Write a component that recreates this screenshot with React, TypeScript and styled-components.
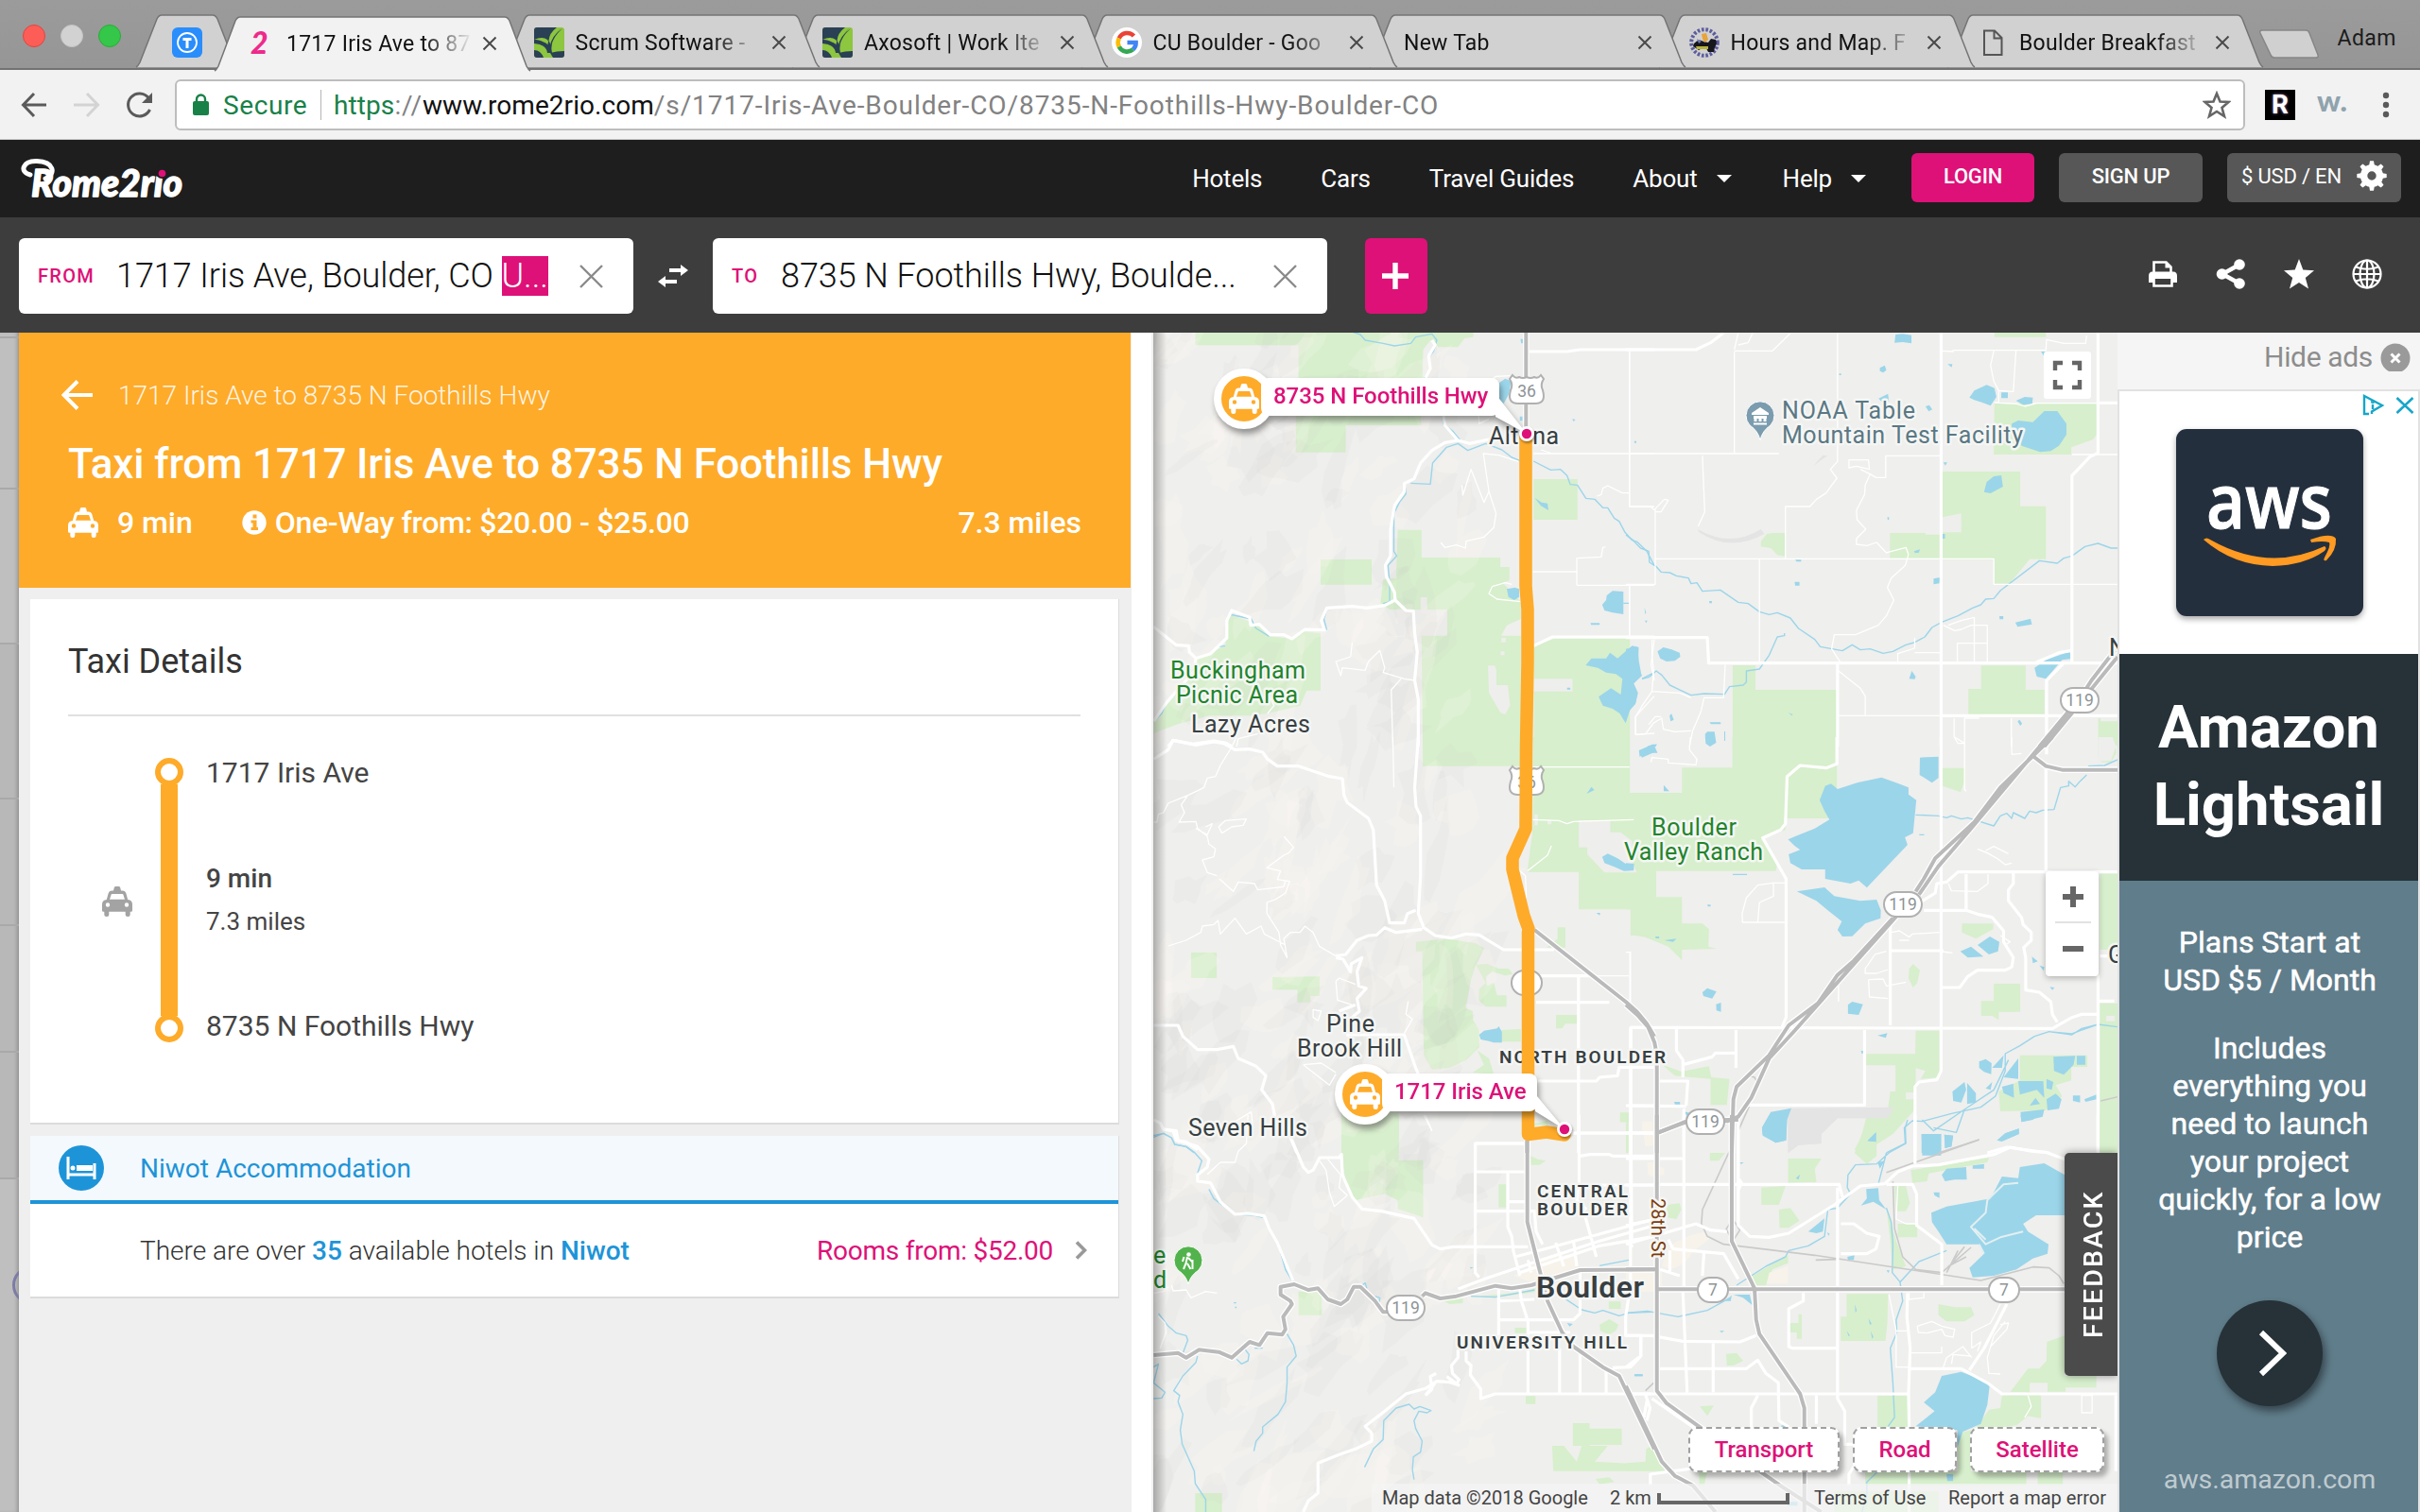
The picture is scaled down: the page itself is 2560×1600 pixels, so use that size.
import React from "react";
import styled, { createGlobalStyle } from "styled-components";

const PINK = "#de1178";
const ORANGE = "#feab2a";
const BLUE = "#1e94d8";
const UI = `Roboto, "Liberation Sans", sans-serif`;

const GlobalStyle = createGlobalStyle`
  * { box-sizing: border-box; }
  html, body { margin: 0; padding: 0; overflow: hidden; }
  body { width: 2560px; height: 1600px; background: #efefef; font-family: ${UI}; }
  svg { display: block; flex: none; }
`;

const Screen = styled.div`
  width: 2560px;
  height: 1600px;
  display: flex;
  flex-direction: column;
  overflow: hidden;
`;

/* ---------- browser chrome ---------- */

const TabStrip = styled.div`
  height: 74px;
  flex: none;
  display: flex;
  align-items: flex-end;
  background: linear-gradient(#9b9b9b, #969696);
  border-bottom: 2px solid #727272;
  position: relative;
`;
const Lights = styled.div`
  display: flex;
  gap: 16px;
  width: 144px;
  padding: 0 0 22px 24px;
`;
const Light = styled.span<{ $c: string; $b: string }>`
  width: 24px;
  height: 24px;
  border-radius: 50%;
  background: ${(p) => p.$c};
  border: 1px solid ${(p) => p.$b};
`;
const Tab = styled.div<{ $w: number; $z: number; $pad: number }>`
  position: relative;
  z-index: ${(p) => p.$z};
  width: ${(p) => p.$w}px;
  height: 57px;
  margin-right: ${(p) => (p.$w < 200 ? -25 : -28.5)}px;
  margin-bottom: ${(p) => (p.$z > 50 ? -2 : 0)}px;
  flex: none;
  display: flex;
  align-items: center;
  padding-left: ${(p) => p.$pad}px;
  padding-top: ${(p) => (p.$z > 50 ? 0 : 2)}px;
`;
const TabShape = styled.svg`
  position: absolute;
  inset: 0;
  z-index: -1;
  overflow: visible;
`;
const TabIcon = styled.div`
  width: 32px;
  height: 32px;
  margin-right: 12px;
  flex: none;
`;
const TabTitle = styled.span<{ $w: number }>`
  width: ${(p) => p.$w}px;
  padding-top: 2px;
  font-size: 23px;
  letter-spacing: 0.25px;
  color: #111;
  white-space: nowrap;
  overflow: hidden;
  mask-image: linear-gradient(90deg, #000 calc(100% - 52px), transparent);
`;
const TabClose = styled.svg`
  margin-left: 10px;
`;
const NewTab = styled.svg`
  margin: 0 0 8px 22px;
`;
const Profile = styled.span`
  margin: 0 0 17px 17px;
  font-size: 23px;
  line-height: 28px;
  letter-spacing: 0.4px;
  color: #1c1c1c;
`;

const Toolbar = styled.div`
  height: 74px;
  flex: none;
  background: #f2f2f2;
  border-bottom: 1px solid #c9c9c9;
  display: flex;
  align-items: center;
  padding: 0 20px 0 21px;
`;
const NavIcons = styled.div`
  display: flex;
  align-items: center;
  gap: 26px;
  width: 164px;
`;
const Omnibox = styled.div`
  width: 2190px;
  height: 54px;
  background: #fff;
  border: 2px solid #bdbdbd;
  border-radius: 6px;
  display: flex;
  align-items: center;
  padding: 0 13px 0 17px;
  font-size: 28px;
  color: #828282;
`;
const Secure = styled.span`
  color: #188148;
  margin-left: 15px;
  border-right: 1px solid #b5b5b5;
  height: 32px;
  line-height: 34px;
  width: 104px;
  letter-spacing: 0.6px;
`;
const Url = styled.span`
  margin-left: 13px;
  flex: 1;
  letter-spacing: 0.92px;
  line-height: 34px;
  padding-top: 2px;
  b { font-weight: 400; color: #188148; letter-spacing: 0.1px; }
  i { font-style: normal; color: #111; letter-spacing: 0.05px; }
`;
const Extensions = styled.div`
  display: flex;
  align-items: center;
  margin-left: 21px;
`;
const ExtR = styled.span`
  width: 32px;
  height: 32px;
  background: #000;
  color: #fff;
  font: 700 28px/32px ${UI};
  text-align: center;
  text-shadow: 0 0 3px #b48cc8;
`;
const ExtW = styled.span`
  width: 34px;
  margin: -10px 35px 0 23px;
  color: #8fa3ad;
  font: 900 31px/30px Lato, sans-serif;
`;

/* ---------- site header ---------- */

const SiteHeader = styled.header`
  height: 82px;
  flex: none;
  background: #1e1e1e;
  display: flex;
  align-items: center;
  padding: 0 20px 0 22px;
  justify-content: space-between;
`;
const SiteNav = styled.nav`
  display: flex;
  align-items: center;
  color: #fff;
  font-size: 26px;
  letter-spacing: -0.2px;
`;
const NavItem = styled.span<{ $gap: number }>`
  margin-right: ${(p) => p.$gap}px;
  display: flex;
  align-items: center;
  gap: 20px;
  white-space: nowrap;
`;
const HeaderButton = styled.div<{ $w: number; $ml: number; $pink?: boolean; $light?: boolean }>`
  width: ${(p) => p.$w}px;
  height: 52px;
  margin-left: ${(p) => p.$ml}px;
  margin-top: -2px;
  padding-bottom: 4px;
  border-radius: 6px;
  background: ${(p) => (p.$pink ? PINK : "#575757")};
  display: flex;
  align-items: center;
  justify-content: center;
  gap: 16px;
  font-size: 22px;
  font-weight: ${(p) => (p.$light ? 400 : 500)};
  white-space: nowrap;
`;
const Caret = styled.i`
  border: 8px solid transparent;
  border-top-color: #fff;
  border-bottom: 0;
`;

const SearchBar = styled.div`
  height: 122px;
  flex: none;
  background: #3d3d3d;
  display: flex;
  align-items: center;
  padding: 2px 40px 0 20px;
`;
const Field = styled.div`
  width: 650px;
  height: 80px;
  background: #fff;
  border-radius: 6px;
  display: flex;
  align-items: center;
  padding: 0 32px 0 20px;
`;
const FieldLabel = styled.span<{ $w: number }>`
  width: ${(p) => p.$w}px;
  color: ${PINK};
  font-size: 20px;
  font-weight: 500;
  letter-spacing: 1.3px;
`;
const FieldValue = styled.span`
  flex: 1;
  font-size: 36px;
  font-weight: 300;
  color: #111;
  white-space: nowrap;
  letter-spacing: -0.07px;
`;
const Selected = styled.span`
  background: ${PINK};
  color: #fff;
`;
const SwapBox = styled.div`
  width: 84px;
  display: flex;
  justify-content: center;
`;
const AddButton = styled.div`
  width: 66px;
  height: 80px;
  margin-left: 40px;
  border-radius: 6px;
  background: ${PINK};
  display: flex;
  align-items: center;
  justify-content: center;
  padding-right: 2px;
`;
const Actions = styled.div`
  margin-left: auto;
  margin-top: -4px;
  display: flex;
  gap: 40px;
`;

/* ---------- page body ---------- */

const Body = styled.main`
  flex: 1;
  display: flex;
  min-height: 0;
`;
const Behind = styled.div`
  width: 20px;
  flex: none;
  background: #bfbfbf;
  box-shadow: inset -4px 0 5px -3px rgba(0, 0, 0, 0.3);
  overflow: hidden;
`;
const BehindRow = styled.div<{ $h: number; $dark?: boolean }>`
  height: ${(p) => p.$h}px;
  border-bottom: 2px solid #a9a9a9;
  background: ${(p) => (p.$dark ? "rgba(0,0,0,.035)" : "transparent")};
`;
const BehindEdge = styled.div`
  width: 40px;
  height: 40px;
  margin: 92px 0 0 13px;
  border: 3px solid #7c7ca6;
  border-radius: 50%;
`;
const Panel = styled.section`
  width: 1177px;
  flex: none;
  background: #efefef;
`;
const RouteHead = styled.div`
  width: 1176px;
  height: 270px;
  background: ${ORANGE};
  color: #fff;
  padding: 46px 52px 0 52px;
`;
const Crumb = styled.div`
  height: 40px;
  display: flex;
  align-items: center;
  gap: 27px;
  margin-left: -7px;
  font-size: 28px;
  font-weight: 300;
  color: rgba(255, 255, 255, 0.88);
`;
const RouteTitle = styled.h1`
  margin: 23px 0 12px;
  height: 60px;
  line-height: 60px;
  font-size: 44px;
  font-weight: 500;
  letter-spacing: -0.18px;
  white-space: nowrap;
`;
const RouteMeta = styled.div`
  height: 40px;
  display: flex;
  align-items: center;
  font-size: 32px;
  font-weight: 500;
  letter-spacing: -0.05px;
  white-space: nowrap;
`;
const Duration = styled.span`
  margin: 0 52px 0 20px;
`;
const Price = styled.span`
  margin-left: 9px;
  flex: 1;
  letter-spacing: -0.3px;
`;
const Card = styled.div<{ $h: number; $mt: number }>`
  display: flow-root;
  width: 1152px;
  height: ${(p) => p.$h}px;
  margin: ${(p) => p.$mt}px 0 0 12px;
  background: #fff;
  border-right: 1px solid #dcdcdc;
  border-bottom: 2px solid #dcdcdc;
`;
const CardTitle = styled.h2`
  margin: 44px 40px 0;
  height: 80px;
  border-bottom: 2px solid #e0e0e0;
  font-size: 36px;
  line-height: 44px;
  font-weight: 400;
  color: #333;
`;
const Journey = styled.div`
  display: flex;
  padding: 44px 0 0 76px;
  color: #444;
`;
const JourneyMode = styled.div`
  width: 56px;
  padding-top: 136px;
`;
const Track = styled.div`
  width: 30px;
  height: 301px;
  margin-right: 24px;
  display: flex;
  flex-direction: column;
  align-items: center;
`;
const Stop = styled.i`
  width: 30px;
  height: 30px;
  border: 6px solid ${ORANGE};
  border-radius: 50%;
  background: #fff;
`;
const TrackLine = styled.i`
  width: 18px;
  flex: 1;
  margin: -2px 0;
  background: ${ORANGE};
`;
const StopText = styled.div<{ $mt?: number; $size?: number; $bold?: boolean }>`
  margin-top: ${(p) => p.$mt ?? 0}px;
  height: 32px;
  line-height: 32px;
  font-size: ${(p) => p.$size ?? 30}px;
  font-weight: ${(p) => (p.$bold ? 500 : 400)};
  white-space: nowrap;
`;
const HotelHead = styled.div`
  height: 72px;
  display: flex;
  align-items: center;
  padding: 0 30px;
  gap: 38px;
  background: #f4f9fd;
  border-bottom: 4px solid ${BLUE};
  color: ${BLUE};
  font-size: 28px;
`;
const HotelRow = styled.div`
  height: 98px;
  display: flex;
  align-items: center;
  padding: 0 33px 0 116px;
  font-size: 28px;
  font-weight: 300;
  color: #333;
  b { color: ${BLUE}; font-weight: 500; }
`;
const Rooms = styled.span`
  margin: 0 23px 0 auto;
  color: ${PINK};
  font-weight: 400;
  letter-spacing: -0.25px;
`;
const ScrollGutter = styled.div`
  width: 23px;
  flex: none;
  background: #fff;
  border-right: 2px solid #f1f1f1;
`;

/* ---------- map ---------- */

const MapPane = styled.section`
  width: 1020px;
  flex: none;
  position: relative;
  overflow: hidden;
  background: #efefed;
`;
const MapShade = styled.div`
  position: absolute;
  inset: 0 auto 0 0;
  width: 14px;
  background: linear-gradient(90deg, rgba(0, 0, 0, 0.28), transparent);
`;
const Callout = styled.div<{ $x: number; $y: number; $w: number }>`
  position: absolute;
  left: ${(p) => p.$x}px;
  top: ${(p) => p.$y}px;
  width: ${(p) => p.$w}px;
  height: 64px;
  display: flex;
  align-items: center;
  filter: drop-shadow(2px 5px 3px rgba(0, 0, 0, 0.38));
`;
const CalloutBadge = styled.div`
  width: 64px;
  height: 64px;
  flex: none;
  border-radius: 50%;
  border: 8px solid #fff;
  background: ${ORANGE};
  display: flex;
  align-items: center;
  justify-content: center;
`;
const CalloutText = styled.div`
  flex: 1;
  height: 40px;
  margin: -4px 0 0 -14px;
  padding-left: 13px;
  background: #fff;
  border-radius: 8px;
  color: ${PINK};
  font-size: 24px;
  line-height: 39px;
  font-weight: 500;
  letter-spacing: -0.05px;
  white-space: nowrap;
`;
const CalloutTail = styled.svg`
  position: absolute;
  left: 100%;
  top: 0;
  margin-left: -4px;
  overflow: visible;
`;
const Fullscreen = styled.div`
  position: absolute;
  left: 942px;
  top: 20px;
  width: 50px;
  height: 50px;
  display: flex;
  align-items: center;
  justify-content: center;
  background: #fff;
  border-radius: 3px;
`;
const ZoomBox = styled.div`
  position: absolute;
  left: 944px;
  top: 570px;
  width: 56px;
  height: 111px;
  background: #fff;
  border-radius: 4px;
  box-shadow: 0 2px 6px rgba(0, 0, 0, 0.25);
  display: flex;
  flex-direction: column;
  align-items: center;
  justify-content: space-evenly;
  padding: 0 0 3px 2px;
`;
const ZoomRule = styled.i`
  width: 38px;
  height: 2px;
  background: #e2e2e2;
`;
const Feedback = styled.div`
  position: absolute;
  left: 964px;
  top: 868px;
  width: 56px;
  height: 236px;
  background: #4b4b4b;
  border-radius: 0 5px 5px 0;
  box-shadow: 0 0 8px rgba(0, 0, 0, 0.4);
  color: #fff;
  font-size: 28.5px;
  font-weight: 500;
  letter-spacing: 2.1px;
  line-height: 61px;
  text-align: center;
  writing-mode: vertical-rl;
  transform: rotate(180deg);
`;
const MapTypes = styled.div`
  position: absolute;
  right: 14px;
  top: 1158px;
  display: flex;
  gap: 14px;
`;
const MapType = styled.span<{ $w: number }>`
  width: ${(p) => p.$w}px;
  height: 48px;
  border: 2px dashed #a0a0a0;
  border-radius: 9px;
  background: #fff;
  box-shadow: 4px 5px 5px rgba(0, 0, 0, 0.28);
  color: ${PINK};
  font-size: 24px;
  line-height: 44px;
  font-weight: 500;
  text-align: center;
`;
const Attribution = styled.div`
  position: absolute;
  right: 0;
  bottom: 0;
  height: 30px;
  padding: 0 13px 0 11px;
  display: flex;
  align-items: center;
  background: rgba(245, 245, 245, 0.7);
  color: #444;
  font-size: 20px;
  white-space: nowrap;
`;
const AttrItem = styled.span<{ $mr: number; $w: number }>`
  margin-right: ${(p) => p.$mr}px;
  width: ${(p) => p.$w}px;
`;
const ScaleBar = styled.i`
  width: 140px;
  height: 12px;
  margin: 2px 26px 0 0;
  border: 4px solid #666;
  border-top: 0;
`;

/* ---------- ads ---------- */

const AdColumn = styled.aside`
  width: 320px;
  flex: none;
  background: #f5f5f5;
  display: flex;
  flex-direction: column;
`;
const HideAds = styled.div`
  height: 60px;
  display: flex;
  align-items: flex-start;
  justify-content: flex-end;
  padding: 9px 10px 0 0;
  gap: 8px;
  color: #8d8d8d;
  font-size: 30px;
  line-height: 34px;
  letter-spacing: -0.35px;
`;
const Ad = styled.div`
  flex: 1;
  border: 2px solid #e2e2e2;
  border-bottom: 0;
  display: flex;
  flex-direction: column;
`;
const AdLogo = styled.div`
  height: 278px;
  background: #fff;
  display: flex;
  flex-direction: column;
  align-items: center;
  padding-left: 2px;
`;
const AdChoices = styled.div`
  align-self: flex-end;
  height: 40px;
  display: flex;
  gap: 11px;
  padding: 3px 4px 0 0;
`;
const AwsTile = styled.div`
  width: 198px;
  height: 198px;
  border-radius: 11px;
  background: #242f3e;
  box-shadow: 0 3px 6px rgba(0, 0, 0, 0.35);
`;
const AdTitle = styled.div`
  height: 240px;
  padding-top: 37px;
  background: #263238;
  color: #fff;
  font-size: 63.5px;
  line-height: 82px;
  font-weight: 700;
  text-align: center;
`;
const AdBody = styled.div`
  flex: 1;
  padding: 45px 29px 0 31px;
  background: #607d8b;
  color: #fff;
  display: flex;
  flex-direction: column;
  align-items: center;
  font-size: 32px;
  line-height: 40px;
  text-align: center;
`;
const AdCopy = styled.div<{ $mt: number }>`
  margin-top: ${(p) => p.$mt}px;
  white-space: nowrap;
  -webkit-text-stroke: 0.5px #fff;
`;
const AdGo = styled.div`
  width: 112px;
  height: 112px;
  margin-top: 47px;
  border-radius: 50%;
  background: #263238;
  box-shadow: 3px 5px 8px rgba(0, 0, 0, 0.45);
  display: flex;
  align-items: center;
  justify-content: center;
  padding-left: 6px;
`;
const AdDomain = styled.div`
  margin-top: 58px;
  font-size: 28.5px;
  color: rgba(255, 255, 255, 0.62);
`;

/* ---------- icons ---------- */

const Taxi = ({ size = 32, color = "#fff" }: { size?: number; color?: string }) => (
  <svg width={size} height={size} viewBox="0 0 32 32">
    <path
      fill={color}
      fillRule="evenodd"
      d="M12 4.5L12.8 1.2Q13.2 0 14.6 0H17.4Q18.8 0 19.2 1.2L20 4.5H21.5Q24.6 4.5 25.4 7.5L27.2 14Q32 14.6 32 19V25.5Q32 26.7 30.8 26.7H29.7V29.5Q29.7 32 27.2 32T24.7 29.5V26.7H7.3V29.5Q7.3 32 4.8 32T2.3 29.5V26.7H1.2Q0 26.7 0 25.5V19Q0 14.6 4.8 14L6.6 7.5Q7.4 4.5 10.5 4.5ZM10.3 8Q9.8 8 9.6 8.8L8 13.8H24L22.4 8.8Q22.2 8 21.7 8ZM6 17.3a2.2 2.2 0 1 0 0 4.4 2.2 2.2 0 0 0 0-4.4ZM26 17.3a2.2 2.2 0 1 0 0 4.4 2.2 2.2 0 0 0 0-4.4Z"
    />
  </svg>
);

const Cross = ({ size, color, w }: { size: number; color: string; w: number }) => (
  <svg width={size} height={size} viewBox={`0 0 ${size} ${size}`}>
    <path d={`M1 1L${size - 1} ${size - 1}M${size - 1} 1L1 ${size - 1}`} stroke={color} strokeWidth={w} fill="none" />
  </svg>
);

const Leaf = () => (
  <svg width="32" height="32" viewBox="0 0 32 32">
    <rect width="32" height="32" rx="3" fill="#8dc63f" />
    <path d="M3 0H27Q19 7 18 15Q16 17 14 13Q9 9 0 13V3Q0 0 3 0Z" fill="#2a4054" />
    <path d="M0 13Q8 12 14 20Q15 9 28 1Q20 9 18.500 18Q18 23 19 27H14Q13 18 0 17Z" fill="#2a4054" />
    <path d="M24 0L29 0Q20 9 18 19L15.500 14Q16 6 24 0Z" fill="#8dc63f" />
    <path d="M30 1Q20 10 18.500 19L17 26L14 23Q11 17 3 14Q14 15 16.500 21Q18 9 30 1Z" fill="#2a4054" />
    <path d="M17 27Q24 25 32 25V29Q32 32 29 32H20Z" fill="#2a4054" />
    <path d="M0 24Q7 24 10 32H3Q0 32 0 29Z" fill="#2a4054" />
  </svg>
);

const GoogleG = () => (
  <svg width="32" height="32" viewBox="0 0 32 32">
    <circle cx="16" cy="16" r="16" fill="#fff" />
    <g fill="none" strokeWidth="4.6">
      <path d="M23.5 9A9.6 9.6 0 0 0 7.8 11.5" stroke="#ea4335" />
      <path d="M7.8 11.5A9.6 9.6 0 0 0 7.8 20.5" stroke="#fbbc05" />
      <path d="M7.8 20.5A9.6 9.6 0 0 0 22.6 23.3" stroke="#34a853" />
      <path d="M22.6 23.3A9.6 9.6 0 0 0 25.6 16H16.5" stroke="#4285f4" />
    </g>
  </svg>
);

const TIcon = () => (
  <svg width="32" height="32" viewBox="0 0 32 32">
    <rect width="32" height="32" rx="6" fill="#2a8dfc" />
    <circle cx="16" cy="16" r="10" fill="none" stroke="#fff" strokeWidth="1.8" />
    <path d="M11.5 12.5H20.5M16 12.5V22" stroke="#fff" strokeWidth="3" />
  </svg>
);

const BuffaloIcon = () => (
  <svg width="32" height="32" viewBox="0 0 32 32">
    <circle cx="16" cy="16" r="13.8" fill="none" stroke="#5b5c9d" strokeWidth="4" strokeDasharray="2.6 1.8" />
    <path d="M5 17Q10 11 15 15L20 16 23 12 28 13Q30 17 27 21L26 26H20L17 20 10 24 4 20Z" fill="#16161d" />
    <path d="M13 7L18 6 20 13 16 16 14 12Z" fill="#e8a33a" />
    <path d="M7 20H20V23H8Z" fill="#b9b33a" />
    <path d="M8 12L13 15 10 17Z" fill="#6d78b5" />
  </svg>
);

const PageIcon = () => (
  <svg width="32" height="32" viewBox="0 0 32 32">
    <path d="M7 3.5H18L25.5 11V29H7ZM17.5 4V11.5H25" fill="none" stroke="#555" strokeWidth="2" />
  </svg>
);

const Gear = () => (
  <svg width="32" height="32" viewBox="0 0 32 32">
    <circle cx="16" cy="16" r="8.4" fill="none" stroke="#fff" strokeWidth="7.4" />
    {[0, 45, 90, 135].map((a) => (
      <g key={a} transform={`rotate(${a} 16 16)`} fill="#fff">
        <path d="M13 6L14 0.3H18L19 6ZM13 26L14 31.7H18L19 26Z" />
      </g>
    ))}
  </svg>
);

const Logo = () => (
  <svg width="180" height="60" viewBox="22 158 180 60">
    <path d="M32 184C20 181 24 169 39 169.500C57 170 60 183 48 188" fill="none" stroke="#fff" strokeWidth="5" strokeLinecap="round" />
    <text x="33" y="207" fontFamily="Lato, sans-serif" fontWeight="900" fontStyle="italic" fontSize="40" fill="#fff" stroke="#fff" strokeWidth="1.4" strokeLinejoin="round" textLength="160" lengthAdjust="spacingAndGlyphs">
      Rome2rio
    </text>
    <circle cx="171.5" cy="180.5" r="7.5" fill="#1e1e1e" />
    <circle cx="171.5" cy="182.5" r="3.8" fill={PINK} />
  </svg>
);

/* ---------- tabs ---------- */

interface TabData {
  title: string;
  icon?: React.ReactNode;
  active?: boolean;
}

const TABS: TabData[] = [
  {
    title: "1717 Iris Ave to 87",
    active: true,
    icon: (
      <svg width="32" height="32" viewBox="0 0 32 32">
        <text x="6" y="27" fontFamily="Lato, sans-serif" fontStyle="italic" fontWeight="900" fontSize="32" fill="#ee2a8b">
          2
        </text>
      </svg>
    ),
  },
  { title: "Scrum Software -", icon: <Leaf /> },
  { title: "Axosoft | Work Ite", icon: <Leaf /> },
  { title: "CU Boulder - Goo", icon: <GoogleG /> },
  { title: "New Tab" },
  { title: "Hours and Map. F", icon: <BuffaloIcon /> },
  { title: "Boulder Breakfast", icon: <PageIcon /> },
];

const TabBackground = ({ w, active }: { w: number; active?: boolean }) => {
  const h = active ? 58 : 56;
  const slope = `M0 ${h}Q2 ${h - 1} 4 ${h - 5}L22 5Q24 1 27 1H${w - 27}Q${w - 24} 1 ${w - 22} 5L${w - 4} ${h - 5}Q${w - 2} ${h - 1} ${w} ${h}`;
  return (
    <TabShape width={w} height="57" viewBox={`0 0 ${w} 57`}>
      <path d={slope} fill={active ? "#f2f2f2" : "#d1d1d1"} stroke="#747474" strokeWidth="1.5" />
    </TabShape>
  );
};

/* ---------- map data: six sheets on a 2 × 3 grid, each in its own units ---------- */

interface Sheet {
  x: number;
  y: number;
  green: string;
  bare?: string;
  shade?: string;
  cream?: string;
  water: string;
  causeway?: string;
  stream: string;
  minor: string;
  road: string;
  hwy: string;
  rail?: string;
}

const SHEETS: Sheet[] = [
  {
    x: 1210,
    y: 350,
    green:
      "M158 0H1012V20L985 24 965 52H905L880 30 858 60 852 300H620V386H467V270H475V46H158ZM1197 471H1332V600H1197ZM543 726H700V806H543ZM780 632H853V720H1095V750H1123V792L1102 800 1158 860V915L1115 935 1097 968H932V885H870V846H850V885H755L727 866 735 790 775 785ZM853 968H1158V1320H857ZM1198 1000L1260 978H1492V1320H1198ZM262 900L330 925 350 935 385 970 455 978 490 955 543 960V1142H500L480 1190 380 1215 330 1222H200L100 1250 30 1278V1240L140 1100 160 1045 250 1000Z",
    bare: "M1057 1063H1078L1083 1078V1125H1118L1125 1190 1110 1218 1095 1212 1060 1150ZM1098 975h14v14h-14zM1096 1018h12v12h-12zM1198 1105H1317V1145H1198Z",
    water:
      "M1092 165L1110 152 1128 160 1122 200 1105 232 1092 215ZM1200 530L1222 545 1240 548 1243 570 1220 556ZM1115 820L1140 815 1153 820V845L1138 855 1120 845ZM1408 870L1420 855 1422 840 1440 826 1473 828V900L1440 895 1415 888ZM1357 1062L1375 1040 1420 1040 1432 1022 1455 1040 1500 1000 1520 1005 1518 1070 1530 1095 1505 1120 1518 1150 1510 1185 1492 1205 1480 1246 1462 1215 1440 1200 1410 1190 1397 1162 1435 1135 1465 1155 1470 1105 1450 1090 1420 1085 1395 1070ZM1155 272h8v14h-8zM1316 280l10 2-6 6zM1372 928h28v6h-26zM1157 26h7v14h-5zM1300 1133h10v6h-10z",
    stream:
      "M630 0L665 12 680 30 735 40 770 48 820 40 835 20 885 10 900 30 890 65 877 80 880 120 862 150M918 270L920 295 950 320 972 348M820 484L880 487 887 420 930 370 965 358 995 380 1050 358 1100 378 1130 402 1155 412M803 500L805 518 785 545 768 580 768 700 777 715 750 745 755 800 755 860 735 866M1197 414L1250 442 1280 440 1300 460 1310 488 1332 490 1358 532 1385 535 1410 562 1425 562 1445 595 1460 605 1478 640 1500 665 1515 670 1545 700 1568 745M30 1240L55 1215 70 1180 100 1150M250 1000L232 1003M262 900L330 915 345 945 385 970M1530 1105L1568 1085M562 884L553 915 562 950M1473 865h18",
    minor:
      "M1492 66V558H1568M1492 808V972M1197 390H1568M1220 378L1255 390M1195 765H1330M1330 808H1568M1330 808V722L1405 718 1410 688 1418 686M1392 525L1405 520 1410 500 1425 492 1470 515H1492M977 490L980 522 1005 440 1045 545 1060 510 1050 440 1043 390 1090 395 1150 415M1060 510L1082 580 1075 625 1045 655 990 668 988 690 960 680 925 688 912 672M1158 860L1085 852 1060 835 1070 812 1110 800 1130 805M640 990L635 1035 590 1050 605 1095 610 1070 680 1078 690 1050 725 1015 740 1070 735 1085 800 1105 832 1110M790 1105L760 1140 765 1320M1028 260L1030 295 1060 280M385 1160L400 1190 380 1215M350 1280L290 1295 285 1320M1065 165L1080 145 1125 143M1568 980L1558 1060 1568 1110M1568 1160L1510 1225V1282L1568 1278",
    road: "M965 348L925 355 885 380 850 420 830 470 800 485 800 510 770 555 758 630 758 715 742 745 745 780 770 830 772 855 740 872 685 880 640 875 562 880 545 920 555 950 495 948 455 978 430 965 388 965 355 932 328 935 325 910 270 888 255 920 255 975 205 1025 160 1040 140 1020 138 1000 100 998 30 940M965 348L1000 358 1060 345M772 855L805 888 828 890 832 960 840 1020 832 1110 843 1170 843 1320M1185 66H1300L1340 60H1568M1198 1000L1255 972H1568M885 30L895 45 875 80 880 120 865 150M160 1040L155 1080 130 1110M130 1110L70 1180 30 1240M920 270L925 300 965 348M75 1320L90 1300 150 1312 215 1302 250 1308 270 1320",
    hwy: "M1174 0V320",
  },
  {
    x: 1720,
    y: 350,
    green:
      "M0 978H12V1320H0ZM1132 6H1290V20H1132ZM1132 231H1446V330L1435 345 1368 370V393H1130ZM972 447H1211V557H1290V725H1240L1178 803H1132V727H972ZM811 642H920V647H972V722H811ZM433 645L450 642H488V716L465 712 445 690 414 685 415 668ZM328 1062H398V1140H648V1320H328ZM1091 1063H1228V1140H1286V1218H1052V1137H1091ZM1451 1230H1458V1240H1510V1320L1480 1300H1451Z",
    bare: "M972 592L1030 580V640H972Z",
    shade: "M220 630Q320 690 415 630L425 645Q320 705 225 640ZM575 430L605 395 620 397 600 410Z",
    water:
      "M828 12L850 10 877 14V40L850 36 825 38ZM780 118L795 110 800 125 790 133 780 128ZM776 215L805 200 808 225 790 230ZM1055 212L1070 190 1108 172 1132 182 1138 210 1120 238 1095 228 1070 220ZM1153 196H1173V214H1153ZM1198 222L1225 210 1250 212 1248 232 1220 235ZM1185 295L1205 285 1250 290 1285 255 1325 255 1353 295 1353 330 1330 365 1305 382 1272 385 1215 365 1200 330 1185 315ZM1100 512L1108 480 1130 462 1153 459 1158 495 1120 516ZM0 1010L35 1003 40 1050 48 1095 22 1120 35 1150 30 1180 12 1205 0 1240ZM97 1018L115 1005 140 1012 165 1022 167 1035 150 1048 125 1050 105 1040ZM1255 1070L1290 1045 1365 1018V1042L1340 1045 1290 1105 1262 1098ZM243 1280L250 1273H272L277 1308 258 1320 245 1310ZM1196 926L1243 914 1247 932 1203 940ZM945 787L965 783 963 802 945 805ZM870 1105L878 1080 890 1098 887 1106ZM134 1222L140 1216 147 1235 137 1240ZM518 797h15v12h-13zM920 240L932 236 941 250 930 256ZM988 106L1003 106 1000 116ZM885 700L903 694 900 704 888 706ZM520 727H538V733H524ZM1203 1240l6-5 8 12-6 7zM1147 906h12v10h-11zM57 880l5 15-3 5zM58 920h8l-4 8zM68 1318L95 1312 92 1320H68ZM1275 66h15l-5 16zM975 418h12l-6 10zM970 645h10v15h-8zM803 592h5v8h-4zM256 858h8v7h-8zM655 136h6v5h-6zM26 350h6v6h-6zM257 1243h34v6h-30zM302 1272h3v30h-3zM498 1212l14 6-2 4z",
    stream:
      "M0 648L22 665 45 690 70 700 72 735 92 748 108 766 135 768 155 778 192 785 200 803 218 800 235 827 290 823 345 862 375 866 410 892 440 901 465 895 505 912 530 945 580 980 597 1003 665 1016 695 997 720 1013 750 1010 790 1024 820 1018 860 997 885 990 918 972 940 942 970 925 1020 905 1065 880 1090 870 1105 852 1130 850 1150 825 1270 730 1325 738 1345 722 1370 715 1410 685 1450 675 1490 690H1510M50 1105L70 1100 93 1080 110 1093 135 1125 200 1157 240 1152 303 1154 318 1130 360 1125 370 1115V1080L410 1074 440 1030 465 972 487 968V960",
    minor:
      "M11 66V558H75L95 575H108L130 538 118 535 90 565V805H0M11 390H470M333 66V390M333 64H450L505 8M333 60L345 6M345 45L375 38 390 6M650 6V415L628 440 648 468 615 515 585 535 565 558H490V722M90 724H1130V805H1510M410 726V1050M235 397L242 575 222 620M11 808V972M685 410H745L748 440 708 430 685 435ZM750 455L768 466H798V397H965M750 455L735 490 733 520 708 570 710 600 737 630 708 660V678L740 682 770 672 800 705 860 688 868 710 858 745 815 785 803 815 823 855 800 905 775 935 705 965 640 965 632 1010 660 1055M720 440L750 455M972 64L1005 66 1005 62H1290L1292 28 1345 40H1412L1415 15M1130 64L1120 110 1130 160 1145 190 1190 193 1198 64M1132 228L1200 232 1225 240 1262 230H1446M1145 190V228M1370 393H1510M653 1080L720 1135 735 1160V1220M650 1222H965M975 935L1010 952 1030 948 1060 935H1110V1050M990 935L1030 920 1070 910V1050M1018 1050V992H1108M835 1050V1025L887 1008V975M887 1022H965M80 980V1030L85 1080 80 1145 50 1190 30 1225V1282L60 1280 85 1245 110 1230 115 1265 150 1273 200 1270M70 1250L90 1225H108M80 1145L165 1150 200 1165M240 1165H300L305 1060M240 1165L230 1210 205 1270 195 1320M1008 1230V1290L1020 1310H1040V1230H1085M1184 1230V1320",
    road: "M0 60H215L260 38 300 6M968 0V1320M1450 6V388L1425 400 1370 460V1050M1450 229H1510M0 974H250L254 1055H1510M650 1060V1320M972 1222H1510M1255 1055L1330 1022 1370 1015M1370 1055H1345L1292 1110V1320",
    hwy: "M1270 1320L1350 1220 1405 1150 1430 1110 1490 1030 1510 1005M1285 1320L1365 1220 1510 1035",
  },
  {
    x: 1210,
    y: 780,
    green:
      "M857 0H1158V92H857ZM1195 0H1492V177H1568V630H1495V547H1336V428H1178L1195 290ZM145 684H224V765H145ZM395 762L540 760 540 822H511V842H472V802H395ZM836 650L930 640 1020 655 1045 670 1018 730 1005 770 988 860 1010 870 1012 900 1030 930 1030 985 990 1025 940 1050 885 1055 860 1010 855 680H836ZM1020 722L1055 720 1090 735 1120 735 1134 752 1110 757 1070 745 1050 760 1055 790 1075 780 1085 820H1114V856H1050L1028 835 1030 800 1050 780ZM1100 930L1158 927V967H1100ZM1271 604H1295V668H1238L1271 640ZM1266 882H1330V910H1295L1285 925H1266ZM607 1190H783V1320H607ZM1463 1192H1490V1222H1463ZM1195 1228L1240 1218 1242 1232H1195ZM1025 995L1060 1020 1075 1070 1010 1065 1045 1040Z",
    bare: "M1336 265H1433V302H1465L1500 330V395L1515 430H1415L1362 372V350H1336ZM1200 245h10v35h-10zM1240 265h12v12h-12z",
    water:
      "M1030 945L1045 932 1085 925 1090 918 1100 935V970H1075L1060 965 1035 960ZM1408 380L1425 370 1455 385 1480 402 1505 405V422L1475 425 1445 412 1415 400ZM1360 180L1375 158 1384 168ZM1522 45L1545 32 1568 25V48L1530 65ZM1390 558h12l-2 8z",
    stream: "M30 1270L60 1258 85 1272 95 1293 130 1300 155 1320",
    minor:
      "M285 0L265 40 235 90 220 125 195 130 185 160 135 185 75 210 60 240 45 245 40 270 30 270M135 185L115 215 125 240 108 270 160 268 165 290 195 315 200 340 220 355 215 380 180 390 195 430 225 440M160 290L195 310 210 275 190 285M230 285L250 265 315 260 305 280 270 285 240 305ZM430 315L460 350 445 368 430 375 378 415 420 425 410 452 448 458 435 495 405 515 378 525 378 560 415 620 420 660 440 700 430 640 450 620 480 620 495 600 520 620 540 665 590 695M232 450L275 490 290 460 340 465 350 485 430 475 435 455M75 663L130 645 175 620 180 600 215 595 228 582 235 625 280 575 315 625 360 600 370 625 435 660M765 0L768 160M590 775L600 765 650 785M590 775L595 835 640 850M520 865L545 870 535 900 520 890ZM812 838L805 880 825 895 800 940M490 1040L545 1035 590 1065M490 1040L570 1105 590 1070M1195 262L1275 265 1300 275 1320 268 1505 262M1178 425L1240 375 1252 345M1150 420L1172 440 1175 510M1495 680V845M1195 95H1492M865 1200L885 1250M1370 758H1490M240 1245L330 1190 335 1240",
    road: "M30 70L75 40 90 10 160 25 215 15 245 20 280 40 325 38 365 48 380 70 410 92H475L570 125 610 132 615 185 625 208 690 258 705 295 715 470 740 520 755 590 800 590 810 560 835 550M843 0L832 160 836 220 850 250V440L843 560 860 605 895 630 945 638 990 625 1030 628 1105 675H1260M590 695L620 690 655 645 690 630 715 628 740 605 775 620 855 610M590 700L612 705 635 745 637 720 670 700 655 745 660 790 683 798 655 830 662 870 640 890 625 950M600 870L650 850M625 945H800L835 1050 845 1075M30 915H105L120 950 165 992H225L275 982 290 1020 345 1045 375 1075 362 1120 395 1165 405 1220 450 1270 470 1320M30 1215L50 1225 60 1245 90 1250 100 1280 130 1285 165 1310M1205 758H1370M1205 842H1430M1335 762V1320M1200 995H1230M1210 1092H1390L1400 1080 1455 1075 1460 1048H1568M1495 920V1320M1495 922H1545M1500 1170H1568M1300 1257H1568M1018 1320V1290H1180",
    hwy: "M1200 612L1480 840 1515 872 1545 910 1568 950M1177 1280V1320",
  },
  {
    x: 1720,
    y: 780,
    green:
      "M0 0H12V177H172V97H327V0H648V258H490V295L418 320 465 400 460 425H93V508H172V592H235L255 610 253 665 278 672 172 675V708L130 665 60 635 15 628V547H0ZM973 98H1040V140L1028 175 973 155ZM1451 0H1500L1507 50 1490 80H1460L1451 60ZM1032 592H1128V610L1075 640 1032 620ZM870 735L882 720 903 740 895 780 882 795 868 765ZM1130 783H1211V872H1145V898L1125 885H1091V838H1130ZM890 932H963V1080L905 1085 920 1060 888 1050ZM738 1006H890V1180L820 1260 760 1300 740 1320 702 1310 715 1285 740 1225 805 1180 812 1125H828V1042H738ZM1456 433H1510V675H1456ZM1456 845H1510V1320H1456ZM1210 1010H1417V1047H1368V1090L1320 1105 1340 1140 1290 1185 1150 1188 1145 1125 1210 1090ZM112 1040L170 1062 255 1045 262 1080 318 1085 310 1168H260V1085L150 1075ZM0 1195H8V1320H0Z",
    bare: "M860 1128H888V1150H860ZM1475 885H1502V902H1475ZM1451 0H1495L1505 30 1490 75 1451 78Z",
    shade: "M498 1178L825 1175 800 1210H650L600 1260V1290L530 1295 498 1320Z",
    water:
      "M595 200L612 155 630 148 650 165 710 145 785 128 830 145 868 160V182L892 200 882 305 857 318 865 342 740 478 715 455 690 465 612 450V420L540 420 505 400 500 372 535 358 518 345 498 325 520 315 580 290 625 262 610 235ZM525 490L610 477 640 505 720 520 770 516 783 550 782 575 735 592 695 632 665 633 650 612 663 585 620 550 585 520ZM903 65L960 62V130L940 145 902 120ZM40 42L85 22 97 50 70 50 42 62ZM243 0H272L262 28 248 20ZM116 152L133 172H116ZM235 810L250 797 278 808 265 830 238 822ZM277 848L292 843V872L278 868ZM682 850L695 840 728 848 715 882 682 878ZM1027 680L1060 665 1098 697 1050 700ZM1080 660L1118 633 1147 650 1143 680 1115 690ZM418 1240L445 1190 508 1178 495 1215 492 1280 460 1288 420 1262ZM0 400L25 402 22 424H0ZM1085 1030L1105 1022 1123 1035 1122 1070 1100 1063 1085 1050ZM1003 1125L1040 1095 1045 1120 1030 1160 1005 1155ZM1048 1098L1075 1130V1160L1048 1165ZM1160 1080L1205 1020V1085ZM1313 1015L1380 1012 1375 1040 1345 1072 1315 1060ZM1385 1012H1411V1040H1385ZM1205 1092H1282L1285 1145 1262 1120 1210 1135ZM1292 1085L1313 1095 1308 1120 1292 1115ZM1292 1150L1320 1132 1338 1150 1330 1180 1295 1185ZM1373 1138H1395V1160L1373 1155ZM1408 1150L1445 1135V1150L1412 1158ZM1212 1190L1285 1182 1280 1205 1215 1222ZM1140 1280L1165 1258 1207 1243V1260L1155 1283ZM908 1260H968V1320H908ZM978 1262L1005 1265 1000 1300 980 1305ZM1240 1170L1258 1145 1272 1165ZM742 1282L768 1255V1285ZM1155 1110L1190 1100 1192 1145 1160 1130ZM1105 1115L1125 1095 1120 1120ZM1125 1050L1160 1010 1155 1050ZM773 947L803 940 798 955ZM148 1158h18v8h-15zM178 1188l18 5-8 10zM1247 697L1265 712 1250 718ZM1270 725l15 5-2 12zM1302 793l14 2-6 8zM118 645L155 640 145 650ZM328 434h44v4h-44zM250 532h10v6h-8zM90 633h12v6h-10zM900 308h16v4h-14zM722 996h8v8h-6z",
    stream:
      "M890 247L960 250 985 256 1000 250 1030 260 1050 256 1130 282 1150 250 1170 242 1185 258 1190 240 1225 258 1240 235 1260 240 1280 232 1315 230 1335 160 1360 155 1360 140 1380 158 1395 140 1415 120M1420 92L1470 90 1510 72M1510 920L1450 912 1400 925 1370 945 1300 935 1255 950 1210 980 1165 1005 1165 1060 1135 1140 1090 1175 1000 1195 910 1220 880 1218 855 1240 858 1290 800 1320M1450 912L1395 932 1370 942 1305 936M1175 1025L1130 1120 1040 1182 945 1250 910 1215M1040 1182L1015 1255 945 1240",
    minor:
      "M490 463H450L405 470 370 510 357 560 358 588H490M453 465V505L410 525 405 588M0 683H12V840M815 620L840 615 870 635 880 625 963 620M840 645L870 645M800 680L765 690 735 735V750L770 750 805 738M745 770L790 768 800 790 860 778M745 770L748 825 805 830M1080 355L1110 368 1140 385 1165 405 1185 400M1105 360L1130 347 1175 370M972 681L1003 685M990 465L1000 488 1080 490 1112 465V435M1185 0V55L1215 52M1010 0L1040 20V165L1045 172M77 80L80 65 130 70V82L215 88 218 70 195 40 198 0M653 790V840M1150 630L1180 650 1165 660",
    road: "M648 0V85L615 98 535 90 495 125 490 275 475 295 420 320 492 450V890L478 925M968 0V1060L955 1088 900 1095 888 1110V1320M12 922L1310 925 1370 890 1400 880H1450M1290 97V425M915 550H1045L1080 562 1125 572 1160 615V650L1190 700 1185 730 1165 740H1080L1050 760 1025 795H972M1045 550V435M895 530L950 495 955 465 985 460 1020 428H1510M1190 430V465L1175 485V520L1215 572 1220 595 1245 620V645L1222 668 1228 700V803L1270 810 1305 840 1310 880 1325 905M1450 755V1320M1450 838H1500M1456 695H1510M812 600V915M810 678H975M733 930V1168H360M338 930V1050M155 925V995L175 1025V1080M175 1040L265 1015 275 1003H335M105 1092H190L185 1170M0 1170L185 1172M15 925V1320M178 1180V1320M0 1257H90M1110 1320L1170 1302 1300 1320M1292 0V55",
    hwy: "M1310 0L1250 60 1150 160 1070 270 950 385 915 450 890 490M1295 0L1060 290 960 410 900 500M820 575L700 710 650 755 590 845 500 915 465 970 440 1010 340 1110 330 1150 325 1320M830 570L640 790 520 930 440 1020 405 1100 385 1145 345 1205 310 1220M1250 60L1290 92 1340 104H1510M0 850L35 882 68 920 88 970 95 1010V1320M100 1255L185 1222M300 1220L340 1212",
    rail: "M960 1320L1085 1278M1458 1155L1510 1142M440 1020L375 1180 345 1250M375 1075L395 1080 405 1100",
  },
  {
    x: 1210,
    y: 1180,
    green:
      "M607 0H783V143H858V325L780 298V270L740 250 650 270 625 230 607 140ZM475 560H547V635H475ZM158 1200H240V1260H158ZM1090 220H1113V293H1090ZM1188 130L1210 140 1235 145 1215 158H1190ZM1140 675H1175V692H1140ZM1173 892H1203V917H1173ZM1318 978H1369V1050H1318ZM1369 995H1468V1047H1369ZM1254 1050H1290L1330 1100 1345 1050H1425L1385 1100 1560 1110V1130H1258ZM1388 1155L1430 1150 1445 1165 1400 1172ZM1400 665L1430 648 1458 665 1450 685 1430 697 1402 685ZM1428 592H1465V615H1428ZM920 590L980 582V597L940 600ZM1000 578L1170 560 1205 548 1200 562 1100 576ZM1463 0H1490V22H1463Z",
    cream: "M1135 510L1240 450 1330 440 1335 480 1200 535ZM1535 60L1568 50V95L1540 100ZM1548 150H1568V190H1548ZM1500 480H1568V560H1500Z",
    water: "M1300 660l18 3-10 8zM1508 823h24v6h-24zM276 594h8v4h-8zM280 608h5v5h-5zM1002 482l10 2-8 4z",
    stream:
      "M30 65L60 58 85 72 95 93 130 100 155 118 178 145 165 185M200 235L215 265 240 285M285 315L340 318 365 325M420 435L435 490 455 525M45 630L75 670 100 692 130 700 135 715 120 755M30 800L45 790 30 850 65 880 55 898 30 900M165 765L160 785 120 828 92 875 110 890 105 910 120 950 112 1000 118 1045 155 1130 158 1170 190 1220V1260M440 695L460 730 468 765 440 800V850L435 910 412 950 365 990V1010L345 1035 338 1067M285 775L300 790 320 780 323 760 310 742M678 1118L705 1060 735 1030 737 970 775 930 815 918 830 933 848 925 882 938 870 945 845 940 830 970 835 995 855 1035 850 1070 828 1085 825 1125 830 1157M1005 575L1080 578 1200 555M1290 580L1345 618 1385 628 1410 620 1460 637 1490 628 1560 625M670 540L680 533 685 550M710 575L725 580 722 600M1400 478L1490 460M340 740H365",
    minor:
      "M235 150L195 188M235 150H280L290 115 315 90 320 0M540 145L560 175 570 245 585 290 625 255 600 230 605 190 565 140M85 540L90 558 130 555 145 580 190 560 225 565M45 640L65 660 68 690 50 740M30 565L60 560 75 545M860 0L885 50",
    road: "M60 45L100 50 105 80 165 100 200 140 195 165 165 190V210L205 215 235 275 280 315 320 312 370 320 385 360 410 405 440 480 458 525M455 80L490 165 505 182 520 175 540 135 600 135 607 125 610 190 640 260 670 298 730 305 830 328 885 412 910 425 950 418H1180M490 1260L505 1225 535 1200V1105L600 1078 650 1060 700 1035V1010L680 988 740 940 805 885 865 868 900 845 940 848 960 855 968 840 948 820 945 795 965 770V745M865 890L885 870 880 830 898 820M865 890L895 850M930 830L970 860M990 750V780L1005 795 1003 825 1035 870V900L1080 885H1560M1018 90H1178M1018 90V500L1030 515M1018 180H1170M1118 180V355L1130 385 1135 430 1155 510M1118 275H1175M1022 305H1200L1205 370 1225 410M1337 0V210L1330 270 1360 300M1350 300L1390 450M1495 0V540L1480 640V700H1530M1340 130L1370 125 1430 125 1440 130H1568M1350 222H1568M965 552L1060 515 1250 450 1400 400 1568 350M1140 450L1250 420 1568 330M1265 405L1290 480M1320 400L1330 480M1180 460L1190 500M1090 550V700M1155 555L1160 590 1180 655V885M1090 590L1200 585M1092 650H1320L1340 630V500M1180 690H1310M1277 740V885M1340 760V885M1420 810V885M1527 700V765L1495 800 1440 802M1155 500L1400 415 1568 385M1540 885L1555 930 1545 970M1300 57H1568",
    hwy: "M30 762L105 755 130 770 170 745 230 752 270 770 325 720 355 730 380 692 425 697 435 680 428 640 455 600 450 590 420 570V545L462 537 505 555 535 550 565 585 605 600 625 585 645 545 665 545 710 590 735 625H750M855 575L865 565 910 582 960 575 1080 542 1130 550 1190 540 1340 492 1568 490M1178 80V340L1215 490 1240 590 1285 690 1320 735 1410 800 1460 828 1568 1060",
  },
  {
    x: 1720,
    y: 1180,
    green:
      "M1456 0H1510V120H1456ZM498 138H600L580 170 585 213 498 215ZM416 230L490 225 470 285 416 285ZM470 300L505 295 533 335 500 358H472ZM258 120H305L285 145H258ZM388 510L498 445V470L450 490 430 540H400ZM740 0H830L770 60V130L740 155 702 120 720 80ZM825 225H860L872 280 860 305H830ZM835 345H895V388H835ZM800 290L830 400 860 480 820 490 812 400ZM875 175L1115 135 1110 150 930 185 925 210 880 215ZM678 568H805L803 660 797 717H660V640H678ZM530 632H540V710H525V690H502V660H530ZM308 758L340 755 360 780 330 795H310ZM960 600L1010 610 1060 610 1070 635 1040 655 985 655 960 635ZM773 890H868V990H773ZM1115 935L1150 930 1155 890 1240 880 1275 890V963L1235 955 1200 985 1060 1005 1085 980ZM1293 720L1348 700V828H1445V865H1350V878H1295V850H1240V880H1180L1235 805H1270L1292 780ZM0 1105L60 1100 62 1060 88 1045 120 1130H0ZM227 925L270 922 250 955ZM735 1130H1230V1175H735ZM1020 1010L1060 1000V1130H1020ZM1265 1130H1342V1175H1265ZM225 1130H250L240 1175H225ZM125 285L165 280 170 300 155 330 125 325ZM640 1195H960V1260H640Z",
    cream: "M50 20H82V60H75V95H58V60H50ZM65 155H88L118 170V190L75 195ZM130 420L150 405 200 380 240 372 260 390 210 430 180 470 140 490 110 480ZM440 500L498 480V535H432ZM0 490H110V560H0Z",
    shade: "M498 0H820L800 10H650L600 60V90L530 95 498 120Z",
    water:
      "M418 40L440 0H495L492 80 460 88 420 65ZM908 60H968V128L910 128ZM978 62L1005 65 1000 100 980 105ZM1212 0H1262L1250 15 1215 22ZM1140 80L1165 58 1207 43V60L1155 83ZM742 82L768 55V85ZM560 370L610 328 605 370 585 375ZM738 235L775 232 778 270 800 300 760 275 722 287 740 265ZM773 150L795 145 780 170ZM970 190L985 170 1045 165 1047 205 1010 205 980 210ZM938 310L985 290 1120 265 1155 195 1205 200 1210 165 1285 153 1348 190V318H1260L1220 345 1235 370 1298 410 1295 440 1250 455 1200 490 1130 510 1065 515 1055 485 1100 440 1085 410 985 410 960 370 940 340ZM915 912L950 880 970 828 1030 815 1118 850 1110 920 1090 980 1035 1005 1018 1055V1000L890 988 948 940ZM330 570H380L388 603 360 580ZM305 590L325 572 322 590ZM522 200L535 188 530 205ZM680 450L702 445 700 460H682ZM985 1140h20v22h-18zM478 985h12v8h-14zM26 823h25v6h-25zM703 600l6 20-4 8zM745 645l10 18-6 2zM678 685l10 15-4 2zM752 685l8 20-4 5zM350 150h12l-8 6zM288 685h14l-8 6zM945 245h18v18l-15-8zM1065 160L1100 155V170H1065ZM492 1228h35v12h-30zM800 493h10l-4 8zM618 372l8 5-4 6z",
    causeway: "M1205 215L1160 220 1110 270 1105 310 1060 355 1105 410 1150 388 1220 370M1070 360L1105 395M1085 410L1100 440",
    stream:
      "M865 15L858 40 860 90 810 118 770 155 705 158 682 190 680 230 690 250 650 295 620 300 610 385 560 415 500 430 490 450 430 480 340 540M800 295L815 340 820 410 818 500 842 530 850 590 830 650 832 690 812 740 820 850 825 960 805 988M842 530L860 510 900 465 985 430M0 628L65 622 160 640 250 620 320 580M775 1130L740 1165V1200L725 1260M800 120L775 220",
    minor:
      "M808 570L830 685V800H870M830 685H863M875 755H970V735M895 670L940 655 970 670 1010 680 1005 705 980 700 970 680 925 692 898 690ZM975 800L985 770 1035 735 1062 770M1062 740V690L1120 660 1150 600M1062 740L1090 720 1080 750M1165 655L1130 700 1110 770 1115 820 1150 822M1150 665L1175 660 1170 680 1120 735M1000 790L1005 760 1060 765M835 225L830 330 860 345H893M1400 890V945H1432V890ZM1235 890L1245 925 1225 960M870 565V585L915 580V565",
    road: "M0 410L215 345 260 365 310 370M0 350L75 335M95 805H370L405 778 430 820 468 850 470 970 500 990M0 885H868M868 885L870 990M650 230V900L672 940V1045H700M1348 140L1290 118 1250 115 1180 102 1130 125 960 158 880 162 835 180 795 218 720 225 640 285 500 375 440 388 380 385 345 350V0M345 200L355 215 345 240M888 0V155M800 220H880L893 250V350L970 410V540M545 565V590L500 615V735L512 740H650M105 220H655L665 260M660 345H700L740 375 778 385 768 425 740 440H660M0 700H80L175 718 350 720 400 700M175 560L188 880M178 0V560M105 138H175M15 0L18 420M268 722V880M240 430L235 510M130 395L145 425 300 440 345 520M105 490L165 510M135 430V500M865 565L863 640 873 740 868 885M875 805H1030L1110 850 1155 885H1510M1055 810L1100 740 1170 600M405 890L385 930V990M585 890V980M75 1175V1140L215 1120M870 1130V1260M700 1115L685 1140V1175M1450 0V120M1505 890V1130M65 905L55 960M80 900L220 1000M0 800L45 765V700M0 57H90M0 138H90M0 222H90",
    hwy: "M95 0V875L125 915 240 1000M0 860L110 1100 150 1145 205 1175 275 1260M100 55L185 20M300 15H345M325 0V400L395 550 400 650 410 695 535 885 548 930V990M0 490H95M100 553H1348M410 1130L480 1180 600 1260M548 1130V1260",
    rail: "M320 110L235 300 232 345 250 385 300 410 580 445 900 495 1090 525 1250 482 1300 485 1330 510 1345 535M820 210L825 360 850 450 890 490 970 500 1060 420M1000 470L1040 418M985 500L1020 430M990 480L1045 450M800 182L1085 78M583 460L650 458M328 330L308 362 328 400 350 365ZM60 875L85 850",
  },
];

/* Faint hill shading over the western foothills, from a fixed seed. */
const hills = (() => {
  let s = 71;
  const rnd = () => ((s = (s * 16807) % 2147483647) / 2147483647);
  const out: { d: string; fill: string; o: number }[] = [];
  for (let i = 0; i < 300; i++) {
    const reach = rnd();
    const cx = 1220 + reach * 350;
    const cy = 352 + rnd() * 1240;
    const len = 16 + rnd() * 50;
    const wid = 8 + rnd() * 20;
    const a = -0.4 - rnd() * 1.2;
    const pts: string[] = [];
    for (let k = 0; k < 11; k++) {
      const t = (k / 11) * Math.PI * 2;
      const r = 0.4 + rnd() * 0.7;
      const px = Math.cos(t) * len * r;
      const py = Math.sin(t) * wid * r;
      pts.push(`${(cx + px * Math.cos(a) - py * Math.sin(a)).toFixed(1)} ${(cy + px * Math.sin(a) + py * Math.cos(a)).toFixed(1)}`);
    }
    const lit = rnd() > 0.5;
    out.push({ d: `M${pts.join("L")}Z`, fill: lit ? "#fdfbf4" : "#c8c8c6", o: lit ? 0.2 : 0.085 });
  }
  return out;
})();

interface Layer {
  key: keyof Sheet;
  fill?: string;
  stroke?: string;
  w?: number;
}
const LAYERS: Layer[] = [
  { key: "green", fill: "#d7efcc" },
  { key: "bare", fill: "#eeeeec" },
  { key: "shade", fill: "#e4e4e4" },
  { key: "cream", fill: "#f7f3ea" },
];
const LINES: Layer[] = [
  { key: "stream", stroke: "#9bd5ea", w: 1.4 },
  { key: "water", fill: "#9bd5ea" },
  { key: "causeway", stroke: "#e3eff0", w: 2 },
  { key: "minor", stroke: "#fff", w: 1.3 },
  { key: "rail", stroke: "#cacaca", w: 1.6 },
  { key: "road", stroke: "#fff", w: 3.2 },
  { key: "hwy", stroke: "#fff", w: 6.6 },
  { key: "hwy", stroke: "#bababa", w: 4 },
];

const SheetLayer = ({ layer }: { layer: Layer }) => (
  <g fill={layer.fill ?? "none"} stroke={layer.stroke} strokeWidth={layer.w} strokeLinejoin="round">
    {SHEETS.map((s) => (
      <g key={`${s.x}-${s.y}`} transform={`translate(${s.x} ${s.y}) scale(0.34439 0.33333)`}>
        <path d={s[layer.key] as string | undefined} vectorEffect="non-scaling-stroke" />
      </g>
    ))}
  </g>
);

interface LabelData {
  t: string;
  x: number;
  y: number;
  w?: number;
  c: string;
  s?: number;
  b?: boolean;
}
const INK = "#383f42";
const PARK = "#21842b";
const PLACE = "#5a7884";
const LABELS: LabelData[] = [
  { t: "Altona", x: 1575, y: 470, w: 74, c: INK },
  { t: "Buckingham", x: 1238, y: 718, w: 143, c: PARK },
  { t: "Picnic Area", x: 1244, y: 744, w: 129, c: PARK },
  { t: "Lazy Acres", x: 1260, y: 775, w: 126, c: INK },
  { t: "NOAA Table", x: 1885, y: 443, w: 141, c: PLACE },
  { t: "Mountain Test Facility", x: 1885, y: 469, w: 255, c: PLACE },
  { t: "Boulder", x: 1747, y: 884, w: 90, c: PARK },
  { t: "Valley Ranch", x: 1718, y: 910, w: 147, c: PARK },
  { t: "Pine", x: 1403, y: 1092, w: 51, c: INK },
  { t: "Brook Hill", x: 1372, y: 1118, w: 111, c: INK },
  { t: "Seven Hills", x: 1257, y: 1202, w: 126, c: INK },
  { t: "NORTH BOULDER", x: 1586, y: 1125, w: 176, c: INK, s: 19, b: true },
  { t: "CENTRAL", x: 1626, y: 1267, w: 96, c: INK, s: 19, b: true },
  { t: "BOULDER", x: 1626, y: 1286, w: 96, c: INK, s: 19, b: true },
  { t: "UNIVERSITY HILL", x: 1541, y: 1427, w: 180, c: INK, s: 19, b: true },
  { t: "Boulder", x: 1625, y: 1373, w: 114, c: INK, s: 32, b: true },
  { t: "e", x: 1220, y: 1337, c: PARK },
  { t: "d", x: 1220, y: 1363, c: PARK },
  { t: "N", x: 2231, y: 694, c: INK },
  { t: "G", x: 2230, y: 1019, c: INK },
];

const SHIELDS: { x: number; y: number; t: string; w: number }[] = [
  { x: 2200, y: 741, t: "119", w: 40 },
  { x: 2013, y: 957, t: "119", w: 40 },
  { x: 1804, y: 1187, t: "119", w: 40 },
  { x: 1487, y: 1384, t: "119", w: 40 },
  { x: 1812, y: 1365, t: "7", w: 32 },
  { x: 2120, y: 1365, t: "7", w: 32 },
  { x: 1615, y: 1040, t: "", w: 32 },
];

const MapDrawing = () => (
  <svg width="1020" height="1248" viewBox="1220 352 1020 1248" fontFamily={UI}>
    {LAYERS.map((l) => (
      <SheetLayer key={l.key} layer={l} />
    ))}
    {hills.map((h, i) => (
      <path key={i} d={h.d} fill={h.fill} opacity={h.o} />
    ))}
    {LINES.map((l, i) => (
      <SheetLayer key={i} layer={l} />
    ))}
    {SHIELDS.map((s) => (
      <g key={`${s.x}-${s.y}`}>
        <rect x={s.x - s.w / 2} y={s.y - 13} width={s.w} height="26" rx="13" fill="#fff" stroke="#b0b0b0" strokeWidth="2" />
        {s.t && (
          <text x={s.x} y={s.y + 6} fontSize="17.5" fill="#8d9396" textAnchor="middle">
            {s.t}
          </text>
        )}
      </g>
    ))}
    {[413, 827].map((y) => (
      <g key={y}>
        <path
          d={`M1600 ${y - 16}Q1603 ${y - 12} 1607 ${y - 14}Q1611 ${y - 12} 1615 ${y - 14}Q1619 ${y - 12} 1623 ${y - 14}Q1627 ${y - 12} 1630 ${y - 16}L1633 ${y - 12}Q1629 ${y - 6} 1632 ${y}Q1636 ${y + 14} 1624 ${y + 14}H1606Q1594 ${y + 14} 1598 ${y}Q1601 ${y - 6} 1597 ${y - 12}Z`}
          fill="#fff"
          stroke="#b0b0b0"
          strokeWidth="2"
        />
        <text x="1615" y={y + 7} fontSize="17.5" fill="#8d9396" textAnchor="middle">
          36
        </text>
      </g>
    ))}
    <g stroke="#f5f6f4" strokeWidth="5" strokeLinejoin="round" paintOrder="stroke">
      {LABELS.map((l) => (
        <text key={l.t + l.y} x={l.x} y={l.y} textLength={l.w} fontSize={l.s ?? 25} fontWeight={l.b ? 600 : 400} fill={l.c}>
          {l.t}
        </text>
      ))}
      <text transform="translate(1747 1268) rotate(90)" fontSize="20" textLength="63" fill="#7a3c0c">
        28th St
      </text>
    </g>
    <g>
      <path d="M1862 466Q1860 456 1851 450A15 15 0 1 1 1873 450Q1864 456 1862 466Z" fill="#7b9cae" stroke="#fff" strokeWidth="1" />
      <path d="M1853 437L1862 431 1871 437V439H1853ZM1855 440H1869V443H1855ZM1855.500 442h3v4h-3zM1860.500 442h3v4h-3zM1865.500 442h3v4h-3zM1855 447.500H1869V449.500H1855Z" fill="#fff" />
      <path d="M1257 1359Q1255 1350 1246 1344A15 15 0 1 1 1268 1344Q1259 1350 1257 1359Z" fill="#52b34c" stroke="#fff" strokeWidth="1" />
      <circle cx="1257.500" cy="1327.500" r="2.300" fill="#fff" />
      <path d="M1256 1330L1254.500 1337 1252 1343M1256 1337L1259.500 1343M1257 1331L1261 1335M1261.500 1333V1343M1252.500 1330L1251 1335" stroke="#fff" strokeWidth="2" fill="none" />
    </g>
    <path
      d="M1614 459V620L1616 645V700L1614.500 790 1614 877 1600 908V920L1612 969 1617 983 1616.500 987V1200.500L1636 1198 1655 1201"
      fill="none"
      stroke={ORANGE}
      strokeWidth="13.500"
      strokeLinejoin="round"
      strokeLinecap="round"
    />
  </svg>
);

const Endpoint = styled.svg<{ $x: number; $y: number }>`
  position: absolute;
  left: ${(p) => p.$x - 12}px;
  top: ${(p) => p.$y - 12}px;
  filter: drop-shadow(1px 2px 1px rgba(0, 0, 0, 0.35));
`;

const StopCallout = ({ x, y, w, label }: { x: number; y: number; w: number; label: string }) => (
  <Callout $x={x} $y={y} $w={w}>
    <CalloutTail width="36" height="80" viewBox="0 0 36 80">
      <path d={label.startsWith("8") ? "M0 18L4 32 33 69 0 51Z" : "M0 18L4 34 33 69 2 50Z"} fill="#fff" />
    </CalloutTail>
    <CalloutBadge>
      <Taxi />
    </CalloutBadge>
    <CalloutText>{label}</CalloutText>
  </Callout>
);

/* ---------- page ---------- */

export default function App() {
  return (
    <Screen>
      <GlobalStyle />
      <TabStrip>
        <Lights>
          <Light $c="#fc5e57" $b="#e2443e" />
          <Light $c="#d2d2d2" $b="#c4c4c4" />
          <Light $c="#34c749" $b="#28ad38" />
        </Lights>
        <Tab $w={108} $z={40} $pad={38}>
          <TabBackground w={108} />
          <TIcon />
        </Tab>
        {TABS.map((t, i) => (
          <Tab key={t.title} $w={334} $z={t.active ? 60 : 30 - i} $pad={t.icon ? 32 : 36}>
            <TabBackground w={334} active={t.active} />
            {t.icon && <TabIcon>{t.icon}</TabIcon>}
            <TabTitle $w={t.icon ? 197 : 237}>{t.title}</TabTitle>
            <TabClose width="16" height="16" viewBox="0 0 16 16">
              <path d="M1.500 1.500L14.500 14.500M14.500 1.500L1.500 14.500" stroke="#4a4a4a" strokeWidth="2" />
            </TabClose>
          </Tab>
        ))}
        <NewTab width="68" height="34" viewBox="0 0 68 34">
          <path d="M5 2H51Q54 2 55 5L64 28Q65 31 62 31H18Q15 31 14 28L3 5Q2 2 5 2Z" fill="#d0d0d0" stroke="#868686" strokeWidth="1.500" />
        </NewTab>
        <Profile>Adam</Profile>
      </TabStrip>

      <Toolbar>
        <NavIcons>
          <svg width="30" height="30" viewBox="0 0 30 30" fill="none" stroke="#5a5a5a" strokeWidth="3">
            <path d="M28 15H4M15 3L3.500 15 15 27" />
          </svg>
          <svg width="30" height="30" viewBox="0 0 30 30" fill="none" stroke="#d3d3d3" strokeWidth="3">
            <path d="M1 15H26M15 3L26.500 15 15 27" />
          </svg>
          <svg width="30" height="30" viewBox="0 0 30 30" fill="none" stroke="#5a5a5a" strokeWidth="3">
            <path d="M25.500 20A12 12 0 1 1 24 7.500" />
            <path d="M28 2V13H17Z" fill="#5a5a5a" stroke="none" />
          </svg>
        </NavIcons>
        <Omnibox>
          <svg width="17" height="24" viewBox="0 0 17 24">
            <rect y="8" width="17" height="15" rx="2" fill="#188148" />
            <path d="M4 9V6A4.500 4.500 0 0 1 13 6V9" fill="none" stroke="#188148" strokeWidth="2.400" />
          </svg>
          <Secure>Secure</Secure>
          <Url>
            <b>https</b>://<i>www.rome2rio.com</i>/s/1717-Iris-Ave-Boulder-CO/8735-N-Foothills-Hwy-Boulder-CO
          </Url>
          <svg width="30" height="30" viewBox="0 0 30 30">
            <path d="M15 3L18.500 11.500 27.500 12 20.500 18 23 27 15 22 7 27 9.500 18 2.500 12 11.500 11.500Z" fill="none" stroke="#666" strokeWidth="2.600" />
          </svg>
        </Omnibox>
        <Extensions>
          <ExtR>R</ExtR>
          <ExtW>w.</ExtW>
          <svg width="8" height="28" viewBox="0 0 8 28" fill="#5a5a5a">
            <circle cx="4" cy="4" r="3.200" />
            <circle cx="4" cy="14" r="3.200" />
            <circle cx="4" cy="24" r="3.200" />
          </svg>
        </Extensions>
      </Toolbar>

      <SiteHeader>
        <Logo />
        <SiteNav>
          <NavItem $gap={62}>Hotels</NavItem>
          <NavItem $gap={62}>Cars</NavItem>
          <NavItem $gap={62}>Travel Guides</NavItem>
          <NavItem $gap={54}>
            About <Caret />
          </NavItem>
          <NavItem $gap={48}>
            Help <Caret />
          </NavItem>
          <HeaderButton $w={130} $ml={0} $pink>
            LOGIN
          </HeaderButton>
          <HeaderButton $w={152} $ml={26}>
            SIGN UP
          </HeaderButton>
          <HeaderButton $w={184} $ml={26} $light>
            $ USD / EN <Gear />
          </HeaderButton>
        </SiteNav>
      </SiteHeader>

      <SearchBar>
        <Field>
          <FieldLabel $w={83}>FROM</FieldLabel>
          <FieldValue>
            1717 Iris Ave, Boulder, CO <Selected>U...</Selected>
          </FieldValue>
          <Cross size={25} color="#8a8a8a" w={2.4} />
        </Field>
        <SwapBox>
          <svg width="32" height="26" viewBox="0 0 32 26" fill="#fff">
            <path d="M12 5H24V1L32 7 24 13V9H12ZM20 17H8V13L0 19 8 25V21H20Z" />
          </svg>
        </SwapBox>
        <Field>
          <FieldLabel $w={52}>TO</FieldLabel>
          <FieldValue>8735 N Foothills Hwy, Boulde...</FieldValue>
          <Cross size={25} color="#8a8a8a" w={2.4} />
        </Field>
        <AddButton>
          <svg width="28" height="28" viewBox="0 0 28 28">
            <path d="M14 0V28M0 14H28" stroke="#fff" strokeWidth="5.400" />
          </svg>
        </AddButton>
        <Actions>
          <svg width="32" height="32" viewBox="0 0 32 32">
            <path d="M6.500 14V3.500H19.500L24.500 8.500V14" fill="none" stroke="#fff" strokeWidth="2.600" />
            <path d="M18.500 3V9.500H25" fill="#fff" />
            <path d="M1 18Q1 13.500 5 13.500H27Q31 13.500 31 18V25H26V21H6V25H1Z" fill="#fff" />
            <path d="M6.500 21V28.500H25.500V21" fill="none" stroke="#fff" strokeWidth="2.600" />
          </svg>
          <svg width="32" height="32" viewBox="0 0 32 32" fill="#fff">
            <path d="M25 6L7 16L25 26" fill="none" stroke="#fff" strokeWidth="4.500" />
            <circle cx="25" cy="6" r="5.800" />
            <circle cx="6.500" cy="16" r="5.800" />
            <circle cx="25" cy="26" r="5.800" />
          </svg>
          <svg width="32" height="32" viewBox="0 0 32 32" fill="#fff">
            <path d="M16 0L20.300 11.500 32 12.300 22.800 20 26 31.500 16 25 6 31.500 9.200 20 0 12.300 11.700 11.500Z" />
          </svg>
          <svg width="32" height="32" viewBox="0 0 32 32" fill="none" stroke="#fff" strokeWidth="2.200">
            <circle cx="16" cy="16" r="14.500" />
            <ellipse cx="16" cy="16" rx="7.500" ry="14.500" />
            <path d="M16 1V31M1.500 16H30.500M4 8.500Q16 13 28 8.500M4 23.500Q16 19 28 23.500" />
          </svg>
        </Actions>
      </SearchBar>

      <Body>
        <Behind>
          <BehindRow $h={6} />
          <BehindRow $h={160} />
          <BehindRow $h={164} />
          <BehindRow $h={164} $dark />
          <BehindRow $h={134} $dark />
          <BehindRow $h={134} $dark />
          <BehindRow $h={134} $dark />
          <BehindEdge />
        </Behind>
        <Panel>
          <RouteHead>
            <Crumb>
              <svg width="33" height="32" viewBox="0 0 33 32" fill="none" stroke="#fff" strokeWidth="4">
                <path d="M33 16H3M17 1.500L2.500 16 17 30.500" />
              </svg>
              1717 Iris Ave to 8735 N Foothills Hwy
            </Crumb>
            <RouteTitle>Taxi from 1717 Iris Ave to 8735 N Foothills Hwy</RouteTitle>
            <RouteMeta>
              <Taxi />
              <Duration>9 min</Duration>
              <svg width="26" height="26" viewBox="0 0 26 26">
                <circle cx="13" cy="13" r="12.700" fill="#fff" />
                <path d="M11.500 4.500H15.500V8.500H11.500ZM9.500 10.500H15.500V18H17V21H9.500V18H11.500V13.500H9.500Z" fill={ORANGE} />
              </svg>
              <Price>One-Way from: $20.00 - $25.00</Price>
              <span>7.3 miles</span>
            </RouteMeta>
          </RouteHead>
          <Card $h={556} $mt={12}>
            <CardTitle>Taxi Details</CardTitle>
            <Journey>
              <JourneyMode>
                <Taxi color="#a3a3a3" />
              </JourneyMode>
              <Track>
                <Stop />
                <TrackLine />
                <Stop />
              </Track>
              <div>
                <StopText>1717 Iris Ave</StopText>
                <StopText $mt={80} $size={28} $bold>
                  9 min
                </StopText>
                <StopText $mt={13} $size={26}>
                  7.3 miles
                </StopText>
                <StopText $mt={79}>8735 N Foothills Hwy</StopText>
              </div>
            </Journey>
          </Card>
          <Card $h={172} $mt={12}>
            <HotelHead>
              <svg width="48" height="48" viewBox="0 0 48 48">
                <circle cx="24" cy="24" r="24" fill={BLUE} />
                <path d="M10 12V36M10 31H38M38 36V19" stroke="#fff" strokeWidth="3" fill="none" />
                <path d="M19 21H36V27H19Z" fill="#fff" />
                <circle cx="15" cy="24" r="2.500" fill="#fff" />
              </svg>
              Niwot Accommodation
            </HotelHead>
            <HotelRow>
              <span>
                There are over <b>35</b> available hotels in <b>Niwot</b>
              </span>
              <Rooms>Rooms from: $52.00</Rooms>
              <svg width="13" height="20" viewBox="0 0 13 20">
                <path d="M2 1.500L10.500 10 2 18.500" fill="none" stroke="#999" strokeWidth="3.600" />
              </svg>
            </HotelRow>
          </Card>
        </Panel>
        <ScrollGutter />

        <MapPane>
          <MapDrawing />
          <MapShade />
          <StopCallout x={64} y={38} w={302} label="8735 N Foothills Hwy" />
          <StopCallout x={192} y={774} w={214} label="1717 Iris Ave" />
          {[
            [395, 107],
            [435, 843],
          ].map(([x, y]) => (
            <Endpoint key={x} $x={x} $y={y} width="24" height="24" viewBox="0 0 24 24">
              <circle cx="12" cy="12" r="8" fill="#fff" />
              <circle cx="12" cy="12" r="5.200" fill={PINK} />
            </Endpoint>
          ))}
          <Fullscreen>
            <svg width="32" height="32" viewBox="0 0 32 32" fill="none" stroke="#666" strokeWidth="4.400">
              <path d="M3 11V3H11M21 3H29V11M29 21V29H21M11 29H3V21" />
            </svg>
          </Fullscreen>
          <ZoomBox>
            <svg width="22" height="22" viewBox="0 0 22 22">
              <path d="M11 0V22M0 11H22" stroke="#666" strokeWidth="6" />
            </svg>
            <ZoomRule />
            <svg width="22" height="22" viewBox="0 0 22 22">
              <path d="M0 11H22" stroke="#666" strokeWidth="6" />
            </svg>
          </ZoomBox>
          <Feedback>FEEDBACK</Feedback>
          <MapTypes>
            <MapType $w={160}>Transport</MapType>
            <MapType $w={110}>Road</MapType>
            <MapType $w={142}>Satellite</MapType>
          </MapTypes>
          <Attribution>
            <AttrItem $w={218} $mr={23}>
              Map data ©2018 Google
            </AttrItem>
            <AttrItem $w={43} $mr={7}>
              2 km
            </AttrItem>
            <ScaleBar />
            <AttrItem $w={118} $mr={24}>
              Terms of Use
            </AttrItem>
            <AttrItem $w={166} $mr={0}>
              Report a map error
            </AttrItem>
          </Attribution>
        </MapPane>

        <AdColumn>
          <HideAds>
            Hide ads
            <svg width="32" height="32" viewBox="0 0 32 32">
              <circle cx="16" cy="18" r="15.500" fill="#9a9a9a" />
              <path d="M11.500 13.500L20.500 22.500M20.500 13.500L11.500 22.500" stroke="#fff" strokeWidth="3" />
            </svg>
          </HideAds>
          <Ad>
            <AdLogo>
              <AdChoices>
                <svg width="24" height="24" viewBox="0 0 24 24" fill="none" stroke="#16a6c9" strokeWidth="2.400">
                  <path d="M7 21H2V2L21 12 10 18.500V21M11 11V16" />
                  <circle cx="11" cy="8.300" r=".8" />
                </svg>
                <svg width="20" height="24" viewBox="0 0 20 24">
                  <path d="M1.500 4L18.500 20M18.500 4L1.500 20" stroke="#16a6c9" strokeWidth="2.600" />
                </svg>
              </AdChoices>
              <AwsTile>
                <svg width="198" height="198" viewBox="2302 454 198 198">
                  <text x="2334" y="559" fontFamily={`"Open Sans", sans-serif`} fontWeight="600" fontSize="80" fill="#fff" stroke="#fff" strokeWidth="1" textLength="133" lengthAdjust="spacingAndGlyphs">
                    aws
                  </text>
                  <path d="M2331 571Q2334 568 2338 571Q2400 606 2459 578Q2462 580 2459 583Q2438 598 2404 599Q2362 598 2331 571Z" fill="#ff9a22" />
                  <path d="M2444 571Q2466 563 2471 570Q2472 582 2461 593Q2457 594 2459 590Q2466 577 2464 574Q2458 572 2445 574Z" fill="#ff9a22" />
                </svg>
              </AwsTile>
            </AdLogo>
            <AdTitle>
              Amazon
              <br />
              Lightsail
            </AdTitle>
            <AdBody>
              <AdCopy $mt={0}>
                Plans Start at
                <br />
                USD $5 / Month
              </AdCopy>
              <AdCopy $mt={32}>
                Includes
                <br />
                everything you
                <br />
                need to launch
                <br />
                your project
                <br />
                quickly, for a low
                <br />
                price
              </AdCopy>
              <AdGo>
                <svg width="30" height="50" viewBox="0 0 30 50">
                  <path d="M3 3L26 25 3 47" fill="none" stroke="#fff" strokeWidth="6" />
                </svg>
              </AdGo>
              <AdDomain>aws.amazon.com</AdDomain>
            </AdBody>
          </Ad>
        </AdColumn>
      </Body>
    </Screen>
  );
}
